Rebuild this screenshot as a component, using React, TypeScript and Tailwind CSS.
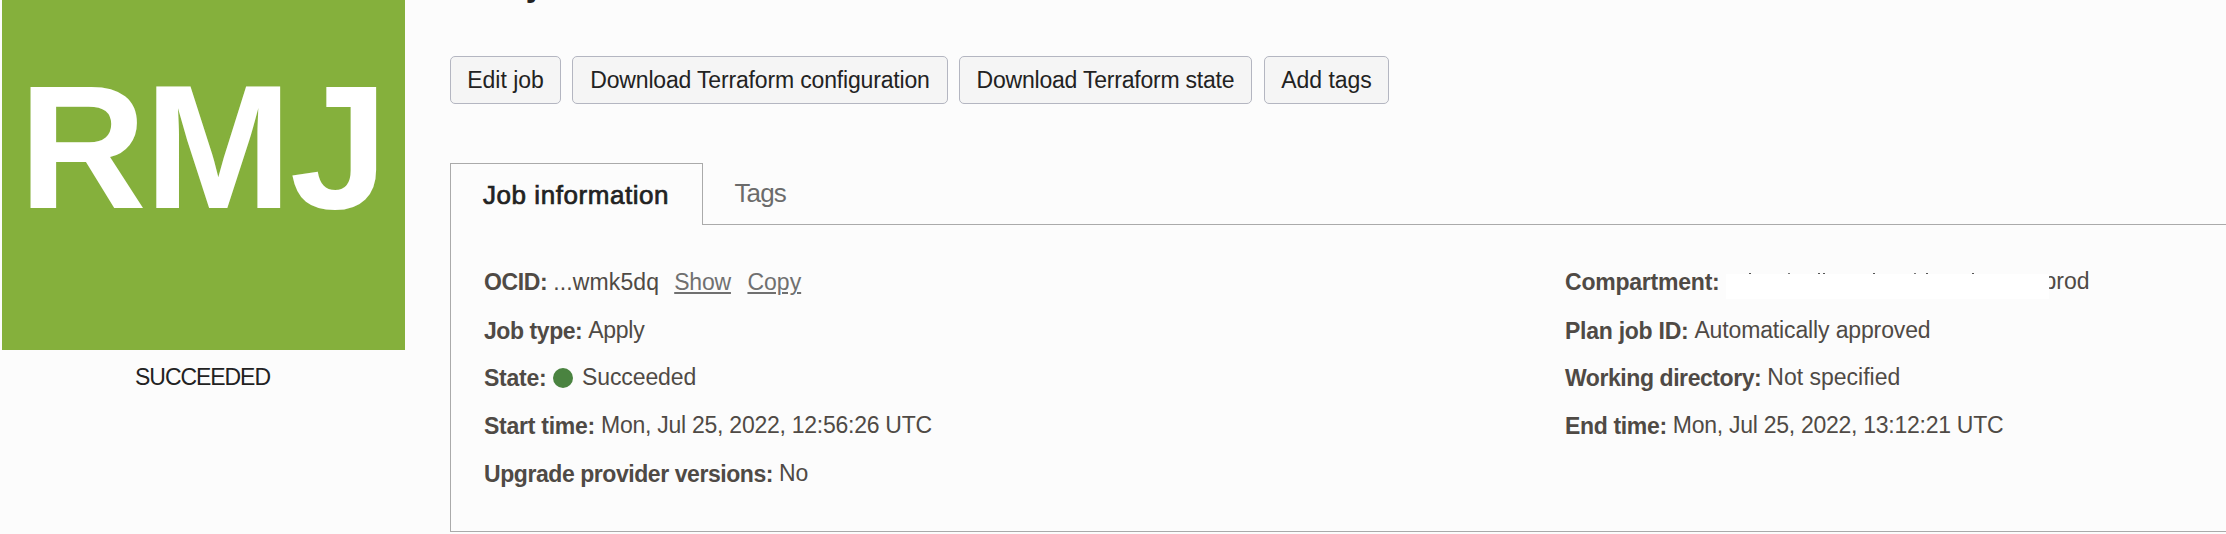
import type { ReactNode } from "react";

type FieldProps = {
  label: string;
  tracking: string;
  height?: string;
  children: ReactNode;
};

function Field({ label, tracking, height = "h-[48px]", children }: FieldProps) {
  return (
    <div className={`flex items-start ${height}`}>
      <dt className={`mr-[6px] pt-px font-bold ${tracking}`}>{label}</dt>
      <dd className="flex items-start">{children}</dd>
    </div>
  );
}

function ActionButton({ label, className }: { label: string; className: string }) {
  return (
    <button
      type="button"
      className={`flex h-[48px] shrink-0 items-center justify-center rounded-[5px] border border-[#b4b6c1] bg-[#f5f5f5] text-[23px] leading-[46px] text-[#222222] ${className}`}
    >
      {label}
    </button>
  );
}

function RedactedName() {
  return (
    <span className="flex flex-col pt-[16px]">
      <span className="flex h-px">
        <span className="ml-[23px] w-[2px] bg-[#555]" />
        <span className="ml-[37px] w-[2px] bg-[#777]" />
        <span className="ml-[28px] w-[2px] bg-[#555]" />
        <span className="ml-[3px] w-[2px] bg-[#555]" />
        <span className="ml-[48px] w-[2px] bg-[#555]" />
        <span className="ml-[39px] w-[2px] bg-[#777]" />
        <span className="ml-[10px] w-[2px] bg-[#555]" />
        <span className="ml-[44px] w-[2px] bg-[#555]" />
      </span>
      <span className="relative z-10 h-[25px] w-[323px] bg-white" />
    </span>
  );
}

export default function App() {
  return (
    <div className="flex h-[534px] w-[2226px] overflow-hidden bg-[#fcfcfc] font-['Liberation_Sans',Arial,sans-serif] whitespace-nowrap">
      <aside className="ml-[2px] flex w-[403px] shrink-0 flex-col items-center">
        <div className="flex h-[350px] w-full justify-center bg-[#85b03c] pt-[47px] pr-[2px] text-[177px] leading-[200px] font-bold tracking-[-2.13px] text-white">
          RMJ
        </div>
        <div className="pt-[13px] pr-[2px] text-[23px] leading-[28px] tracking-[-1.06px] text-[#222222]">
          SUCCEEDED
        </div>
      </aside>

      <main className="ml-[45px] flex w-[1776px] shrink-0 flex-col">
        <div className="flex h-[56px] items-start overflow-hidden">
          <h1 className="-mt-[37px] ml-[78px] text-[36px] leading-[40px] font-bold text-[#222222]">
            j
          </h1>
        </div>

        <div className="flex h-[48px]">
          <ActionButton label="Edit job" className="w-[111px]" />
          <ActionButton label="Download Terraform configuration" className="ml-[11px] w-[376px] tracking-[-0.164px]" />
          <ActionButton label="Download Terraform state" className="ml-[11px] w-[293px] tracking-[-0.215px]" />
          <ActionButton label="Add tags" className="ml-[12px] w-[125px] tracking-[-0.04px]" />
        </div>

        <div className="mt-[59px] flex h-[62px]" role="tablist">
          <div
            role="tab"
            className="w-[253px] border-t border-r border-l border-[#aaaaaa] pl-[32px] text-[26px] leading-[62px] tracking-[0.55px] text-[#222222] [-webkit-text-stroke:0.7px_#222222]"
          >
            Job information
          </div>
          <div
            role="tab"
            className="flex-1 border-b border-[#aaaaaa] pl-[31.5px] text-[26px] leading-[60px] tracking-[-0.9px] text-[#6b6b6b]"
          >
            Tags
          </div>
        </div>

        <section className="flex h-[307px] border-b border-l border-[#aaaaaa] pt-[32px] pl-[33px] text-[23px] leading-[48px] text-[#4f4a45]">
          <dl className="w-[1081px] shrink-0">
            <Field label="OCID:" tracking="tracking-[-0.375px]" height="h-[49px]">
              <span className="pt-px tracking-[0.12px]">...wmk5dq</span>
              <a className="ml-[15px] pt-px tracking-[-0.2px] text-[#707070] underline decoration-2 underline-offset-2">Show</a>
              <a className="ml-[16.5px] pt-px text-[#707070] underline decoration-2 underline-offset-2">Copy</a>
            </Field>
            <Field label="Job type:" tracking="tracking-[-0.434px]" height="h-[47px]">
              <span className="tracking-[-0.3px]">Apply</span>
            </Field>
            <Field label="State:" tracking="tracking-[-0.248px]">
              <span className="mt-[15px] mr-[8.5px] ml-px size-[20px] rounded-full bg-[#4a8340]" />
              <span className="tracking-[-0.087px]">Succeeded</span>
            </Field>
            <Field label="Start time:" tracking="tracking-[-0.248px]">
              <span className="tracking-[-0.257px]">Mon, Jul 25, 2022, 12:56:26 UTC</span>
            </Field>
            <Field label="Upgrade provider versions:" tracking="tracking-[-0.436px]">
              <span className="tracking-[-0.11px]">No</span>
            </Field>
          </dl>

          <dl className="shrink-0">
            <Field label="Compartment:" tracking="tracking-[-0.219px]" height="h-[49px]">
              <RedactedName />
              <span className="-ml-[5px]">prod</span>
            </Field>
            <Field label="Plan job ID:" tracking="tracking-[-0.258px]" height="h-[47px]">
              <span className="tracking-[-0.137px]">Automatically approved</span>
            </Field>
            <Field label="Working directory:" tracking="tracking-[-0.429px]">
              <span>Not specified</span>
            </Field>
            <Field label="End time:" tracking="tracking-[-0.34px]">
              <span className="tracking-[-0.267px]">Mon, Jul 25, 2022, 13:12:21 UTC</span>
            </Field>
          </dl>
        </section>
      </main>
    </div>
  );
}
